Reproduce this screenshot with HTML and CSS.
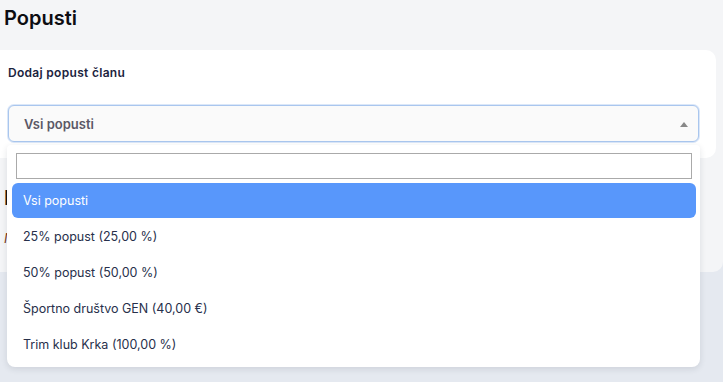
FILE: index.html
```html
<!DOCTYPE html>
<html>
  <head>
    <meta charset="utf-8">
    <title>Popusti</title>
    <link rel="stylesheet" href="styles.css">
  </head>
  <body>
    <div class="page">
      <h1 class="title">Popusti</h1>

      <div class="card">
        <div class="label">Dodaj popust članu</div>
        <div class="select-wrap">
          <div class="select">
            <span class="select-text">Vsi popusti</span>
            <span class="arrow"></span>
          </div>
          <div class="dropdown">
            <div class="search"><input type="text"></div>
            <ul class="options">
              <li class="option active">Vsi popusti</li>
              <li class="option">25% popust (25,00 %)</li>
              <li class="option">50% popust (50,00 %)</li>
              <li class="option">Športno društvo GEN (40,00 €)</li>
              <li class="option">Trim klub Krka (100,00 %)</li>
            </ul>
          </div>
        </div>
      </div>

      <div class="section">
        <h2 class="subtitle">Izbrani popusti</h2>
        <p class="empty">Ni dodanih popustov</p>
      </div>
    </div>
    <div class="footer"></div>
  </body>
</html>
```

FILE: styles.css
```css
html, body {
  margin: 0;
  padding: 0;
}
body {
  background: #e5e9f0;
  font-family: "Inter", "DejaVu Sans", sans-serif;
  color: #1e2538;
}
.page {
  background: #f4f5f7;
  height: 272px;
  border-radius: 0 0 10px 0;
}
.footer {
  height: 110px;
}
.title {
  margin: 0;
  padding: 6px 0 0 4px;
  height: 50px;
  box-sizing: border-box;
  font-size: 20px;
  font-weight: 600;
  color: #0d0d12;
}
.card {
  background: #fff;
  width: 716px;
  height: 108px;
  border-radius: 0 10px 10px 0;
  padding: 15px 0 0 8px;
  box-sizing: border-box;
}
.label {
  font-size: 12px;
  font-weight: 600;
  letter-spacing: 0.3px;
  color: #1c2440;
  height: 40px;
}
.select-wrap {
  position: relative;
  width: 691px;
  z-index: 5;
}
.select {
  height: 37px;
  box-sizing: border-box;
  border: 1px solid #a9c6ee;
  box-shadow: 0 0 0 1px #dbe7f8;
  border-radius: 6px;
  background: #fafafa;
  display: flex;
  align-items: center;
  justify-content: space-between;
  padding: 0 10px 0 15px;
}
.select-text {
  font-size: 13px;
  font-weight: 600;
  color: #5b5866;
}
.arrow {
  width: 0;
  height: 0;
  border-left: 4px solid transparent;
  border-right: 4px solid transparent;
  border-bottom: 5px solid #888;
  margin-top: 2px;
}
.dropdown {
  position: absolute;
  left: -1px;
  top: 40px;
  width: 693px;
  height: 222px;
  box-sizing: border-box;
  background: #fff;
  border-radius: 4px 4px 8px 8px;
  box-shadow: 0 2px 6px rgba(30, 40, 60, 0.12);
  padding: 8px 4px 0 5px;
}
.search {
  padding: 0 4px;
}
.search input {
  display: block;
  width: 100%;
  height: 26px;
  box-sizing: border-box;
  border: 1px solid #aaa;
  margin: 0;
}
.options {
  list-style: none;
  margin: 4px 0 0 0;
  padding: 0;
}
.option {
  height: 36px;
  display: flex;
  align-items: center;
  padding-left: 11px;
  font-size: 12.5px;
  color: #27304b;
  border-radius: 6px;
}
.option.active {
  height: 35px;
  background: #5897fb;
  color: #fff;
}
.section {
  padding: 28px 0 0 4px;
}
.subtitle {
  margin: 0;
  font-size: 20px;
  font-weight: 600;
  color: #1a1410;
}
.empty {
  margin: 20px 0 0 0;
  font-size: 13px;
  font-style: italic;
  color: #7a3a1a;
}
```
